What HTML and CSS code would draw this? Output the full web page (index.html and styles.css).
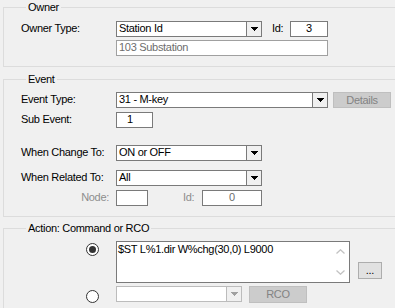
FILE: index.html
```html
<!DOCTYPE html>
<html lang="en">
<head>
  <meta charset="UTF-8" />
  <title>Event Action</title>
  <link rel="stylesheet" href="styles.css">
</head>
<body>
  <fieldset class="group owner">
    <legend>Owner</legend>
    <div class="row">
      <span class="lbl">Owner Type:</span>
      <div class="combo w146">
        <span class="val">Station Id</span>
        <span class="drop"><svg width="7" height="4" viewBox="0 0 7 4"><path d="M0 0H7V1H6V2H5V3H4V4H3V3H2V2H1V1H0Z"/></svg></span>
      </div>
      <span class="id-lbl">Id:</span>
      <div class="box id-box">3</div>
    </div>
    <div class="row gap3">
      <span class="lbl"></span>
      <div class="box name-box muted">103 Substation</div>
    </div>
  </fieldset>

  <fieldset class="group event">
    <legend>Event</legend>
    <div class="row">
      <span class="lbl">Event Type:</span>
      <div class="combo w212">
        <span class="val">31 - M-key</span>
        <span class="drop"><svg width="7" height="4" viewBox="0 0 7 4"><path d="M0 0H7V1H6V2H5V3H4V4H3V3H2V2H1V1H0Z"/></svg></span>
      </div>
      <button class="btn details" disabled>Details</button>
    </div>
    <div class="row gap4">
      <span class="lbl">Sub Event:</span>
      <div class="box sub-box">1</div>
    </div>
    <div class="row gap17">
      <span class="lbl">When Change To:</span>
      <div class="combo w146">
        <span class="val">ON or OFF</span>
        <span class="drop"><svg width="7" height="4" viewBox="0 0 7 4"><path d="M0 0H7V1H6V2H5V3H4V4H3V3H2V2H1V1H0Z"/></svg></span>
      </div>
    </div>
    <div class="row gap9">
      <span class="lbl">When Related To:</span>
      <div class="combo w146">
        <span class="val">All</span>
        <span class="drop"><svg width="7" height="4" viewBox="0 0 7 4"><path d="M0 0H7V1H6V2H5V3H4V4H3V3H2V2H1V1H0Z"/></svg></span>
      </div>
    </div>
    <div class="row gap4">
      <span class="lbl right off">Node:</span>
      <div class="box node-box"></div>
      <span class="node-id off">Id:</span>
      <div class="box nid-box">0</div>
    </div>
  </fieldset>

  <fieldset class="group action">
    <legend>Action: Command or RCO</legend>
    <div class="row tall">
      <span class="lbl radio-cell">
        <svg width="13" height="13" viewBox="0 0 13 13"><circle cx="6.5" cy="6.5" r="6" fill="#fff" stroke="#333"/><circle cx="6.5" cy="6.5" r="3.5" fill="#333"/></svg>
      </span>
      <div class="memo">
        <div class="memo-text">$ST L%1.dir W%chg(30,0) L9000</div>
        <div class="scroll">
          <svg width="9" height="5" viewBox="0 0 9 5"><path d="M0.5 4.5L4.5 0.8L8.5 4.5" fill="none" stroke="#c2c2c2" stroke-width="1.3"/></svg>
          <svg width="9" height="5" viewBox="0 0 9 5"><path d="M0.5 0.5L4.5 4.2L8.5 0.5" fill="none" stroke="#c2c2c2" stroke-width="1.3"/></svg>
        </div>
      </div>
      <button class="btn more">...</button>
    </div>
    <div class="row gap3">
      <span class="lbl radio-cell low">
        <svg width="13" height="13" viewBox="0 0 13 13"><circle cx="6.5" cy="6.5" r="6" fill="#fff" stroke="#333"/></svg>
      </span>
      <div class="combo w126 dim">
        <span class="val"></span>
        <span class="drop"><svg width="7" height="4" viewBox="0 0 7 4"><path d="M0 0H7V1H6V2H5V3H4V4H3V3H2V2H1V1H0Z"/></svg></span>
      </div>
      <button class="btn rco" disabled>RCO</button>
    </div>
  </fieldset>
</body>
</html>
```

FILE: styles.css
```css
* { box-sizing: border-box; margin: 0; padding: 0; }

body {
  background: #f0f0f0;
  color: #000;
  font-family: 'Liberation Sans', Arial, sans-serif;
  font-size: 11px;
  letter-spacing: -0.3px;
  overflow: hidden;
  width: 395px;
  height: 308px;
}

/* group boxes run off the right edge, so no right border */
.group {
  width: 392px;
  margin-left: 3px;
  border: 1px solid #dcdcdc;
  border-right: none;
  padding: 6px 0 10px 17px;
  min-width: 0;
}

.group legend {
  margin-left: 5px;
  padding: 0 2px;
  line-height: 13px;
}

.owner { margin-top: 1px; padding-top: 7px; }
.event { margin-top: 6px; }
.action { margin-top: 5px; }

.row {
  display: flex;
  align-items: flex-start;
  height: 16px;
}
.row.tall { height: 42px; }

.gap3 { margin-top: 3px; }
.gap4 { margin-top: 4px; }
.gap9 { margin-top: 9px; }
.gap17 { margin-top: 17px; }

.lbl {
  width: 95px;
  height: 16px;
  padding-top: 2px;
  line-height: 11px;
  white-space: nowrap;
  flex-shrink: 0;
}
.lbl.right { text-align: right; padding-right: 7px; }
.off { color: #8d8d8d; }

.box, .combo {
  height: 16px;
  background: #fff;
  border: 1px solid #7a7a7a;
  line-height: 11px;
  padding-top: 1px;
  white-space: nowrap;
  flex-shrink: 0;
}
.box { padding-left: 2px; }
.muted { color: #6d6d6d; border-color: #a0a0a0; }

.combo { display: flex; padding-top: 0; }
.combo .val { flex: 1; padding: 1px 0 0 2px; }
.combo .drop {
  width: 15px;
  height: 14px;
  border-left: 1px solid #7a7a7a;
  background: #f0f0f0;
  display: flex;
  align-items: center;
  justify-content: center;
}
.combo .drop svg { fill: #000; display: block; }
.combo.dim { border-color: #bcbcbc; }
.combo.dim .drop { border-left-color: #bcbcbc; }
.combo.dim .drop svg { fill: #a0a0a0; }

.w146 { width: 146px; }
.w212 { width: 212px; }
.w126 { width: 126px; }

.id-lbl {
  width: 18px;
  margin-left: 10px;
  padding-top: 2px;
  line-height: 11px;
}
.id-box { width: 38px; text-align: center; padding-left: 0; }
.name-box { width: 212px; }
.sub-box { width: 37px; padding-left: 10px; }
.node-box { width: 32px; }
.node-id {
  width: 54px;
  padding: 2px 0 0 35px;
  line-height: 11px;
}
.nid-box { width: 60px; text-align: center; padding-left: 0; color: #6d6d6d; }

.btn {
  font: inherit;
  letter-spacing: inherit;
  height: 17px;
  line-height: 11px;
  background: #e1e1e1;
  border: 1px solid #adadad;
  color: #000;
  flex-shrink: 0;
}
.btn[disabled] {
  background: #cccccc;
  border-color: #bfbfbf;
  color: #838383;
}
.details { width: 58px; height: 16px; margin-left: 5px; }
.rco { width: 58px; margin-left: 7px; }
.more { width: 24px; margin: 21px 0 0 8px; }

.radio-cell { padding: 2px 0 0 65px; }
.radio-cell svg { display: block; }
.radio-cell.low { padding-top: 4px; }

.memo {
  display: flex;
  width: 234px;
  height: 42px;
  background: #fff;
  border: 1px solid #7a7a7a;
  flex-shrink: 0;
}
.memo-text { flex: 1; padding: 2px 0 0 1px; line-height: 11px; }
.scroll {
  width: 17px;
  display: flex;
  flex-direction: column;
  justify-content: space-between;
  align-items: center;
  padding: 7px 0 7px;
}
.scroll svg { display: block; }
```
